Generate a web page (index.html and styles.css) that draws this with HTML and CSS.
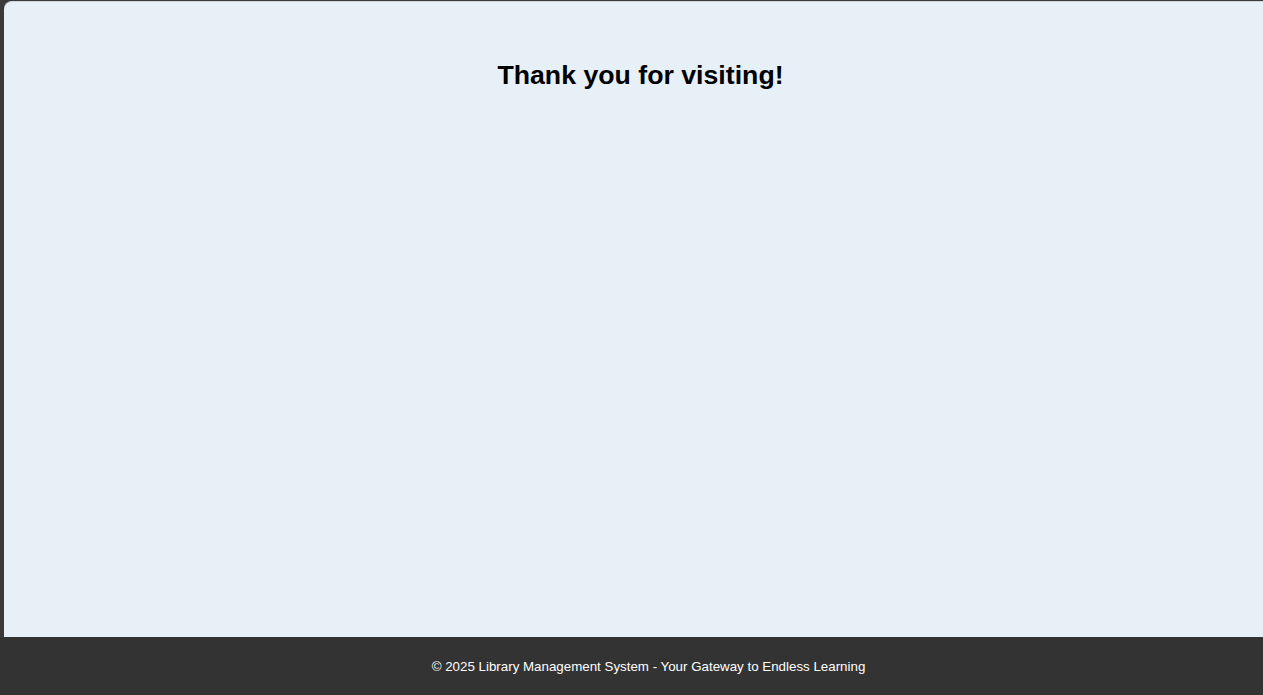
FILE: index.html
```html
<!DOCTYPE html>
<html lang="en">
<head>
<meta charset="utf-8">
<title>Thank You</title>
<link rel="stylesheet" href="styles.css">
</head>
<body>
<div class="page">
  <main class="content">
    <h1 class="title">Thank you for visiting!</h1>
  </main>
  <footer class="footer">
    <p class="footer-text">&copy; 2025 Library Management System - Your Gateway to Endless Learning</p>
  </footer>
</div>
</body>
</html>
```

FILE: styles.css
```css
html, body {
  margin: 0;
  padding: 0;
  height: 100%;
  overflow: hidden;
}
body {
  background: #3a3a3a;
  font-family: "Liberation Sans", Arial, sans-serif;
}
.page {
  display: flex;
  flex-direction: column;
  height: 695px;
  width: 1297px;
}
.content {
  margin: 1px 0 0 4px;
  height: 636px;
  width: 1273px;
  box-sizing: border-box;
  background: #e7eff7;
  border-top: 1px solid #cfd6de;
  border-top-left-radius: 8px;
  padding-top: 57px;
}
.title {
  margin: 0;
  text-align: center;
  font-size: 26.7px;
  font-weight: bold;
  color: #000;
  line-height: 32px;
}
.footer {
  flex: 1;
  background: #333333;
  display: flex;
  align-items: center;
  justify-content: center;
}
.footer-text {
  margin: 0;
  color: #ffffff;
  font-size: 13.33px;
}
```
